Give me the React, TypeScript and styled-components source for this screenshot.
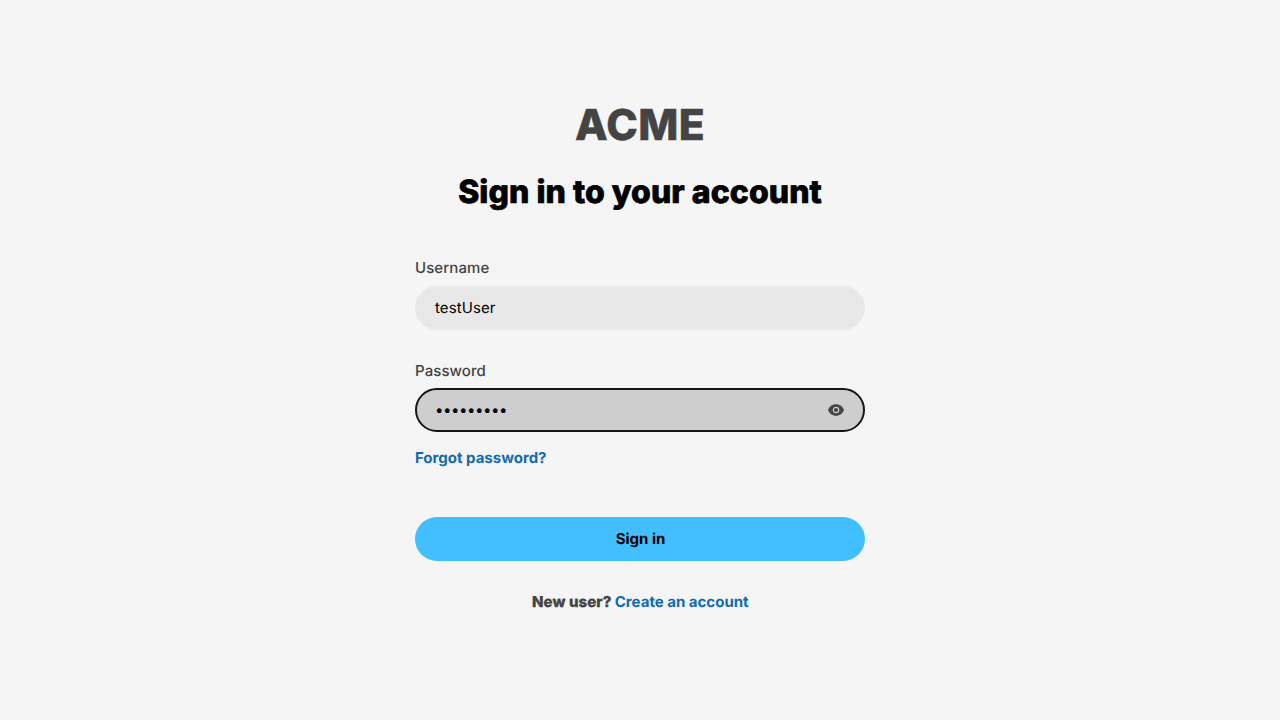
import React from "react";
import styled, { createGlobalStyle } from "styled-components";

const GlobalStyle = createGlobalStyle`
  *, *::before, *::after { box-sizing: border-box; }
  body {
    margin: 0;
    background: #f5f5f5;
    font-family: Inter, sans-serif;
    font-optical-sizing: none;
    text-rendering: geometricPrecision;
    -webkit-font-smoothing: antialiased;
  }
`;
const Page = styled.main`
  min-height: 100vh;
  display: flex;
  flex-direction: column;
  align-items: center;
  padding-top: 99px;
`;
const Logo = styled.div`
  font-size: 42.5px;
  line-height: 54px;
  font-weight: 800;
  letter-spacing: 0.4px;
  -webkit-text-stroke: 0.5px #444;
  color: #444;
`;
const Title = styled.h1`
  margin: 19px 0 0;
  font-size: 32px;
  line-height: 40px;
  font-weight: 800;
  letter-spacing: 0.05px;
  -webkit-text-stroke: 0.7px #000;
  color: #000;
`;
const Form = styled.form`
  width: 450px;
  margin-top: 44.45px;
  display: flex;
  flex-direction: column;
`;
const Field = styled.div`
  display: flex;
  flex-direction: column;
  & + & { margin-top: 29.15px; }
`;
const Label = styled.label`
  font-size: 15px;
  line-height: 24px;
  height: 29.4px;
  font-weight: 500;
  letter-spacing: 0.08px;
  color: #444;
`;
const InputBox = styled.div<{ $active?: boolean }>`
  height: 44px;
  display: flex;
  align-items: center;
  padding: 0 18px;
  border: 2px solid ${(p) => (p.$active ? "#161616" : "transparent")};
  border-radius: 22px;
  background: ${(p) => (p.$active ? "#cecece" : "#e8e8e8")};
`;
const Input = styled.input`
  flex: 1;
  min-width: 0;
  padding: 0;
  border: 0;
  outline: 0;
  background: transparent;
  font-family: inherit;
  font-size: 15px;
  line-height: 24px;
  letter-spacing: ${(p) => (p.type === "password" ? "-0.45px" : "0.1px")};
  text-rendering: inherit;
  color: #000;
`;
const RevealButton = styled.button`
  display: flex;
  padding: 0;
  border: 0;
  background: none;
  color: #444;
`;
const Link = styled.a`
  color: #126bae;
  font-size: 15px;
  line-height: 24px;
  font-weight: 700;
  letter-spacing: 0;
  text-decoration: none;
`;
const ForgotRow = styled.div`
  margin-top: 13.6px;
  line-height: 24px;
  display: flex;
`;
const SubmitButton = styled.button`
  height: 44px;
  margin-top: 47px;
  padding: 0 0 0 1px;
  border: 0;
  border-radius: 22px;
  background: #42bfff;
  color: #000;
  font-family: inherit;
  font-size: 15px;
  font-weight: 700;
  line-height: 24px;
  text-rendering: inherit;
`;
const Footer = styled.p`
  margin: 29px 0 0;
  padding-left: 0.6px;
  text-align: center;
  font-size: 15px;
  line-height: 24px;
  color: #444;
`;
const Prompt = styled.span`
  font-weight: 800;
  letter-spacing: 0.08px;
  -webkit-text-stroke: 0.3px #444;
`;

export default function App() {
  return (
    <Page>
      <GlobalStyle />
      <Logo>ACME</Logo>
      <Title>Sign in to your account</Title>
      <Form>
        <Field>
          <Label htmlFor="username">Username</Label>
          <InputBox>
            <Input id="username" type="text" defaultValue="testUser" />
          </InputBox>
        </Field>
        <Field>
          <Label htmlFor="password">Password</Label>
          <InputBox $active>
            <Input id="password" type="password" defaultValue="password1" />
            <RevealButton type="button" aria-label="Show password">
              <svg width="18" height="18" viewBox="0 0 18 18">
                <path fill="currentColor" d="M9 3.2C5.2 3.2 2.1 5.6 1 9c1.1 3.4 4.2 5.8 8 5.8s6.9-2.4 8-5.8C15.9 5.6 12.8 3.2 9 3.2z" />
                <circle cx="9" cy="9" r="2.7" fill="none" stroke="#cecece" strokeWidth="1.2" />
              </svg>
            </RevealButton>
          </InputBox>
        </Field>
        <ForgotRow>
          <Link href="#">Forgot password?</Link>
        </ForgotRow>
        <SubmitButton type="button">Sign in</SubmitButton>
        <Footer>
          <Prompt>New user? </Prompt>
          <Link href="#">Create an account</Link>
        </Footer>
      </Form>
    </Page>
  );
}
